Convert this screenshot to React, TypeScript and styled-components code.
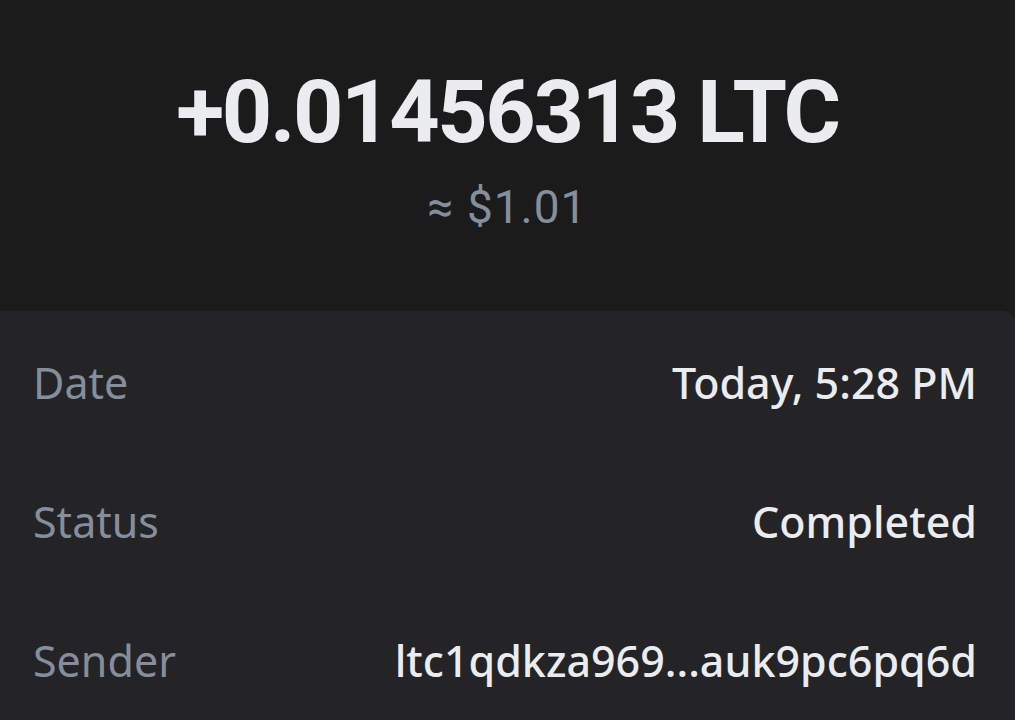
import React from "react";
import styled, { createGlobalStyle } from "styled-components";

const Global = createGlobalStyle`
  html, body { margin: 0; padding: 0; background: #1b1b1b; }
  body { width: 1015px; height: 720px; overflow: hidden; }
`;

const Page = styled.div`
  display: flex;
  flex-direction: column;
  width: 1015px;
  height: 720px;
  overflow: hidden;
  background: #1b1b1b;
`;

const Header = styled.header`
  flex-shrink: 0;
  display: flex;
  flex-direction: column;
  align-items: center;
  height: 311px;
  box-sizing: border-box;
  padding-top: 64px;
`;

const Amount = styled.div`
  font-family: "Roboto", sans-serif;
  font-weight: 700;
  font-size: 88px;
  line-height: 96px;
  color: #eaecef;
  letter-spacing: -2.4px;
`;

const Fiat = styled.div`
  margin-top: 19px;
  font-family: "Roboto", sans-serif;
  font-weight: 400;
  font-size: 46px;
  line-height: 56px;
  color: #848e9c;
  letter-spacing: 1px;
`;

const Card = styled.section`
  flex: 1 0 auto;
  display: flex;
  flex-direction: column;
  background: #242426;
  border-top-right-radius: 12px;
  padding: 2px 38px 0 33px;
`;

const Row = styled.div`
  flex-shrink: 0;
  display: flex;
  justify-content: space-between;
  align-items: center;
  height: 139px;
  font-family: "Noto Sans", sans-serif;
  font-size: 43px;
  line-height: 58px;
`;

const Label = styled.span`
  color: #848e9c;
  font-weight: 400;
`;

const Value = styled.span`
  color: #eaecef;
  font-weight: 500;
`;

const rows = [
  { label: "Date", value: "Today, 5:28 PM" },
  { label: "Status", value: "Completed" },
  { label: "Sender", value: "ltc1qdkza969...auk9pc6pq6d" },
];

export default function App() {
  return (
    <Page>
      <Global />
      <Header>
        <Amount>+0.01456313 LTC</Amount>
        <Fiat>≈ $1.01</Fiat>
      </Header>
      <Card>
        {rows.map((r) => (
          <Row key={r.label}>
            <Label>{r.label}</Label>
            <Value>{r.value}</Value>
          </Row>
        ))}
      </Card>
    </Page>
  );
}
